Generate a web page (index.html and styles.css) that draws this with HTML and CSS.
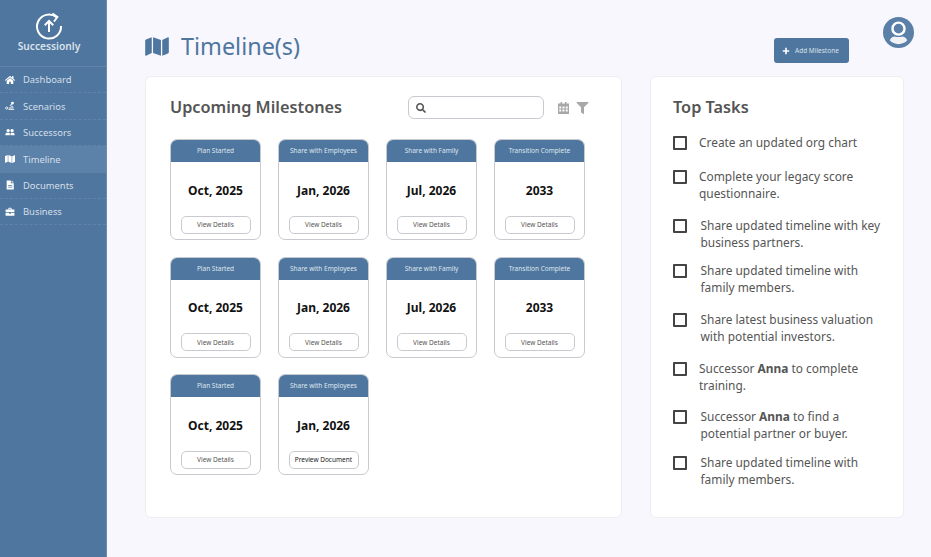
FILE: index.html
```html
<!DOCTYPE html>
<html>
<head>
    <title>Timeline(s)</title>
    <link rel="stylesheet" href="styles.css">
</head>
<body>
    <aside class="sidebar">
        <div class="logo">
            <svg class="logo-mark" viewBox="0 0 28 28" fill="none" stroke="currentColor" stroke-width="2">
                <path d="M21.5 5.2A12 12 0 1 0 26 14"></path>
                <path d="M17.5 1.5L22.5 5l-3.6 4.6" stroke-width="1.8"></path>
                <path d="M14 20V9M9.8 13.2L14 9l4.2 4.2"></path>
            </svg>
            <div class="logo-name">Successionly</div>
        </div>
        <nav class="nav">
            <a class="nav-item">
                <svg class="nav-icon" viewBox="0 0 576 512"><path d="M280.37 148.26L96 300.11V464a16 16 0 0 0 16 16l112.06-.29a16 16 0 0 0 15.92-16V368a16 16 0 0 1 16-16h64a16 16 0 0 1 16 16v95.64a16 16 0 0 0 16 16.05L464 480a16 16 0 0 0 16-16V300L295.67 148.26a12.19 12.19 0 0 0-15.3 0zM571.6 251.47L488 182.56V44.05a12 12 0 0 0-12-12h-56a12 12 0 0 0-12 12v72.61L318.47 43a48 48 0 0 0-61 0L4.34 251.47a12 12 0 0 0-1.6 16.9l25.5 31A12 12 0 0 0 45.15 301l235.22-193.74a12.19 12.19 0 0 1 15.3 0L530.9 301a12 12 0 0 0 16.9-1.6l25.5-31a12 12 0 0 0-1.7-16.93z"></path></svg>
                Dashboard
            </a>
            <a class="nav-item">
                <svg class="nav-icon" viewBox="0 0 24 24"><circle cx="4" cy="17" r="2.6" fill="none" stroke="#fff" stroke-width="2"></circle><path d="M8 21h14v-2.500H9z"></path><path d="M9 16.500h9c2 0 2-4-.5-4h-3c-2.500 0-2-4 0-4H17" fill="none" stroke="#fff" stroke-width="2"></path><circle cx="18" cy="5" r="3.500"></circle></svg>
                Scenarios
            </a>
            <a class="nav-item">
                <svg class="nav-icon" viewBox="0 0 24 24"><circle cx="7.500" cy="8.500" r="4"></circle><circle cx="17" cy="8.500" r="4"></circle><path d="M1 20v-2.500c0-2.500 2-4 4-4h5c2 0 1.500 4 1.500 6.500zM13 20c0-3 0-6.500 1.500-6.500H19c2.500 0 4 1.500 4 4V20z"></path></svg>
                Successors
            </a>
            <a class="nav-item nav-item-active">
                <svg class="nav-icon" viewBox="0 0 576 512"><path d="M0 117.66v346.32c0 11.32 11.43 19.06 21.94 14.86L160 416V32L20.12 87.95A32.006 32.006 0 0 0 0 117.66zM192 416l192 64V96L192 32v384zM554.06 33.16L416 96v384l139.88-55.95A31.996 31.996 0 0 0 576 394.34V48.02c0-11.32-11.43-19.06-21.94-14.86z"></path></svg>
                Timeline
            </a>
            <a class="nav-item">
                <svg class="nav-icon" viewBox="0 0 24 24"><path fill-rule="evenodd" d="M4 1h10v7h7v15H4zM16 1l5 5h-5zM7.500 12v2h10v-2zM7.500 16v2h10v-2z"></path></svg>
                Documents
            </a>
            <a class="nav-item">
                <svg class="nav-icon" viewBox="0 0 24 24"><path fill-rule="evenodd" d="M8 6V3.500L9.500 2h5L16 3.500V6h6.500v6h-21V6zM10 4v2h4V4zM1.500 14H10v2h4v-2h8.500v7h-21z"></path></svg>
                Business
            </a>
        </nav>
    </aside>

    <main class="main">
        <header class="page-head">
            <h1 class="page-title">
                <svg class="title-icon" viewBox="0 0 576 512" fill="currentColor"><path d="M0 117.66v346.32c0 11.32 11.43 19.06 21.94 14.86L160 416V32L20.12 87.95A32.006 32.006 0 0 0 0 117.66zM192 416l192 64V96L192 32v384zM554.06 33.16L416 96v384l139.88-55.95A31.996 31.996 0 0 0 576 394.34V48.02c0-11.32-11.43-19.06-21.94-14.86z"></path></svg>
                Timeline(s)
            </h1>
            <button class="add-btn">
                <svg class="add-icon" viewBox="0 0 10 10"><path d="M4 1h2v3h3v2H6v3H4V6H1V4h3z"></path></svg>
                Add Milestone
            </button>
            <svg class="avatar" viewBox="0 0 32 32">
                <circle cx="16" cy="16" r="16" fill="#5a80a8"></circle>
                <circle cx="16" cy="12" r="6.200" fill="none" stroke="#fff" stroke-width="2.500"></circle>
                <path d="M7 24c1-3 4-4 5-4 2 1 6 1 8 0 1 0 4 1 5 4-2 2.500-5.500 4-9 4s-7-1.500-9-4z" fill="#f2f2f6"></path>
            </svg>
        </header>

        <div class="panels">
            <section class="panel milestones">
                <div class="milestones-head">
                    <h2 class="panel-title">Upcoming Milestones</h2>
                    <div class="search">
                        <svg class="search-icon" viewBox="0 0 512 512"><path d="M505 442.7L405.3 343c-4.500-4.500-10.600-7-17-7H372c27.600-35.300 44-79.700 44-128C416 93.100 322.900 0 208 0S0 93.100 0 208s93.100 208 208 208c48.300 0 92.700-16.400 128-44v16.300c0 6.400 2.500 12.500 7 17l99.700 99.700c9.400 9.400 24.600 9.400 33.900 0l28.300-28.300c9.400-9.400 9.400-24.600.1-34zM208 336c-70.700 0-128-57.200-128-128 0-70.700 57.200-128 128-128 70.700 0 128 57.200 128 128 0 70.700-57.200 128-128 128z"></path></svg>
                    </div>
                    <svg class="tool-icon tool-calendar" viewBox="0 0 22 24"><path fill-rule="evenodd" d="M5 0h3v3h6V0h3v3h5v21H0V3h5zM2.500 9v4h4V9zM9 9v4h4V9zM15.500 9v4h4V9zM2.500 15v4h4v-4zM9 15v4h4v-4zM15.500 15v4h4v-4z"></path></svg>
                    <svg class="tool-icon tool-filter" viewBox="0 0 512 512"><path d="M487.976 0H24.028C2.710 0-8.047 25.866 7.058 40.971L192 225.941V432c0 7.831 3.821 15.170 10.237 19.662l80 55.980C298.020 518.690 320 507.493 320 487.980V225.941l184.947-184.970C520.021 25.896 509.338 0 487.976 0z"></path></svg>
                </div>
                <div class="card-grid">
                    <div class="card"><div class="card-head">Plan Started</div><div class="card-date">Oct, 2025</div><button class="card-btn">View Details</button></div>
                    <div class="card"><div class="card-head">Share with Employees</div><div class="card-date">Jan, 2026</div><button class="card-btn">View Details</button></div>
                    <div class="card"><div class="card-head">Share with Family</div><div class="card-date">Jul, 2026</div><button class="card-btn">View Details</button></div>
                    <div class="card"><div class="card-head">Transition Complete</div><div class="card-date">2033</div><button class="card-btn">View Details</button></div>
                    <div class="card"><div class="card-head">Plan Started</div><div class="card-date">Oct, 2025</div><button class="card-btn">View Details</button></div>
                    <div class="card"><div class="card-head">Share with Employees</div><div class="card-date">Jan, 2026</div><button class="card-btn">View Details</button></div>
                    <div class="card"><div class="card-head">Share with Family</div><div class="card-date">Jul, 2026</div><button class="card-btn">View Details</button></div>
                    <div class="card"><div class="card-head">Transition Complete</div><div class="card-date">2033</div><button class="card-btn">View Details</button></div>
                    <div class="card"><div class="card-head">Plan Started</div><div class="card-date">Oct, 2025</div><button class="card-btn">View Details</button></div>
                    <div class="card"><div class="card-head">Share with Employees</div><div class="card-date">Jan, 2026</div><button class="card-btn card-btn-dark">Preview Document</button></div>
                </div>
            </section>

            <section class="panel tasks">
                <h2 class="panel-title">Top Tasks</h2>
                <ul class="task-list">
                    <li class="task"><span class="checkbox"></span><span>Create an updated org chart</span></li>
                    <li class="task"><span class="checkbox"></span><span>Complete your legacy score questionnaire.</span></li>
                    <li class="task task-wide"><span class="checkbox"></span><span>Share updated timeline with key business partners.</span></li>
                    <li class="task task-wide"><span class="checkbox"></span><span>Share updated timeline with family members.</span></li>
                    <li class="task task-wide"><span class="checkbox"></span><span>Share latest business valuation with potential investors.</span></li>
                    <li class="task"><span class="checkbox"></span><span>Successor <b>Anna</b> to complete training.</span></li>
                    <li class="task task-wide"><span class="checkbox"></span><span>Successor <b>Anna</b> to find a potential partner or buyer.</span></li>
                    <li class="task task-wide"><span class="checkbox"></span><span>Share updated timeline with family members.</span></li>
                </ul>
            </section>
        </div>
    </main>
</body>
</html>
```

FILE: styles.css
```css
:root {
    --blue: #4f769f;
    --blue-light: #5c82aa;
    --background: #f7f7fd;
    --border: #c9cacf;
    --text: #555555;
}

* {
    margin: 0;
    padding: 0;
    box-sizing: border-box;
}

body {
    font-family: 'Noto Sans', 'Open Sans', sans-serif;
    background-color: var(--background);
    color: var(--text);
    display: flex;
    width: 931px;
    height: 557px;
    overflow: hidden;
}

.sidebar {
    width: 107px;
    flex: none;
    background: var(--blue);
    border-right: 1px solid #6c8db0;
    color: #fff;
}

.logo {
    height: 66px;
    padding: 12px 8px 0 0;
    display: flex;
    flex-direction: column;
    align-items: center;
}

.logo-mark {
    width: 28px;
    height: 28px;
}

.logo-name {
    font-size: 10.2px;
    font-weight: 600;
    line-height: 13px;
    color: #d9e2eb;
}

.nav {
    border-top: 1px solid #6083a9;
}

.nav-item {
    display: flex;
    align-items: center;
    gap: 8px;
    height: 26.4px;
    padding-left: 5px;
    font-size: 9.4px;
    color: #d5dfe9;
    border-bottom: 1px dashed #6083a9;
}

.nav-item-active {
    background: var(--blue-light);
    border-bottom: none;
}

.nav-icon {
    width: 10px;
    height: 10px;
    fill: #fff;
    flex: none;
}

.main {
    flex: 1;
    padding: 0 27px 0 38px;
}

.page-head {
    position: relative;
    height: 76px;
}

.page-title {
    display: flex;
    align-items: center;
    gap: 12px;
    padding-top: 29px;
    font-size: 23.4px;
    font-weight: 400;
    line-height: 35px;
    color: var(--blue);
}

.title-icon {
    width: 24px;
    height: 21px;
}

.add-btn {
    position: absolute;
    top: 38px;
    left: 629px;
    width: 75px;
    height: 25px;
    display: flex;
    align-items: center;
    gap: 5px;
    padding-left: 8px;
    border: none;
    border-radius: 3px;
    background: var(--blue);
    color: #d9e2eb;
    font-family: inherit;
    font-size: 6.5px;
    white-space: nowrap;
}

.add-icon {
    width: 8px;
    height: 8px;
    fill: #fff;
    flex: none;
}

.avatar {
    position: absolute;
    top: 17px;
    left: 738px;
    width: 31px;
    height: 31px;
}

.panels {
    display: flex;
    gap: 28px;
    align-items: flex-start;
}

.panel {
    height: 442px;
    background: #fff;
    border: 1px solid #ededf2;
    border-radius: 6px;
}

.milestones {
    width: 477px;
    padding: 18px 24px;
}

.tasks {
    width: 254px;
    padding: 19px 22px;
}

.panel-title {
    font-size: 16.3px;
    font-weight: 600;
    line-height: 23px;
    color: var(--text);
    white-space: nowrap;
}

.milestones-head {
    display: flex;
    align-items: center;
    height: 25px;
}

.search {
    width: 136px;
    height: 23px;
    margin-left: auto;
    display: flex;
    align-items: center;
    padding-left: 7px;
    border: 1px solid var(--border);
    border-radius: 6px;
}

.search-icon {
    width: 10px;
    height: 10px;
    fill: #555;
}

.tool-icon {
    fill: #a8a8a8;
    height: 12px;
}

.tool-calendar {
    width: 11px;
    margin-left: 14px;
}

.tool-filter {
    width: 13px;
    margin: 0 8px 0 7px;
}

.card-grid {
    display: grid;
    grid-template-columns: repeat(4, 91px);
    grid-auto-rows: 101px;
    column-gap: 17px;
    row-gap: 16.6px;
    margin-top: 19.3px;
}

.card {
    display: flex;
    flex-direction: column;
    align-items: center;
    border: 1px solid var(--border);
    border-radius: 7px;
    overflow: hidden;
}

.card-head {
    width: calc(100% + 2px);
    margin-top: -1px;
    height: 23px;
    flex: none;
    background: var(--blue);
    color: #dfe6ee;
    font-size: 6.5px;
    line-height: 23px;
    text-align: center;
    white-space: nowrap;
}

.card-date {
    margin-top: 19.5px;
    font-size: 12px;
    font-weight: 700;
    line-height: 17px;
    color: #111;
}

.card-btn {
    width: 70px;
    height: 18px;
    margin-top: 17px;
    flex: none;
    background: #fff;
    border: 1px solid var(--border);
    border-radius: 5px;
    font-family: inherit;
    font-size: 6.5px;
    color: #555;
    white-space: nowrap;
}

.card-btn-dark {
    color: #222;
}

.task-list {
    list-style: none;
    margin-top: 15px;
}

.task {
    display: flex;
    align-items: flex-start;
    gap: 12px;
    font-size: 11.9px;
    line-height: 17px;
    margin-bottom: 15px;
}

.task:first-child {
    margin-bottom: 17px;
}

.task:nth-child(3) {
    margin-bottom: 11px;
}

.task:nth-child(6) {
    margin-bottom: 14px;
}

.task:nth-child(7) {
    margin-bottom: 12px;
}

.task-wide {
    gap: 13.500px;
}

.checkbox {
    width: 14px;
    height: 14px;
    flex: none;
    margin-top: 2px;
    border: 2px solid #444;
    border-radius: 1px;
}
```
